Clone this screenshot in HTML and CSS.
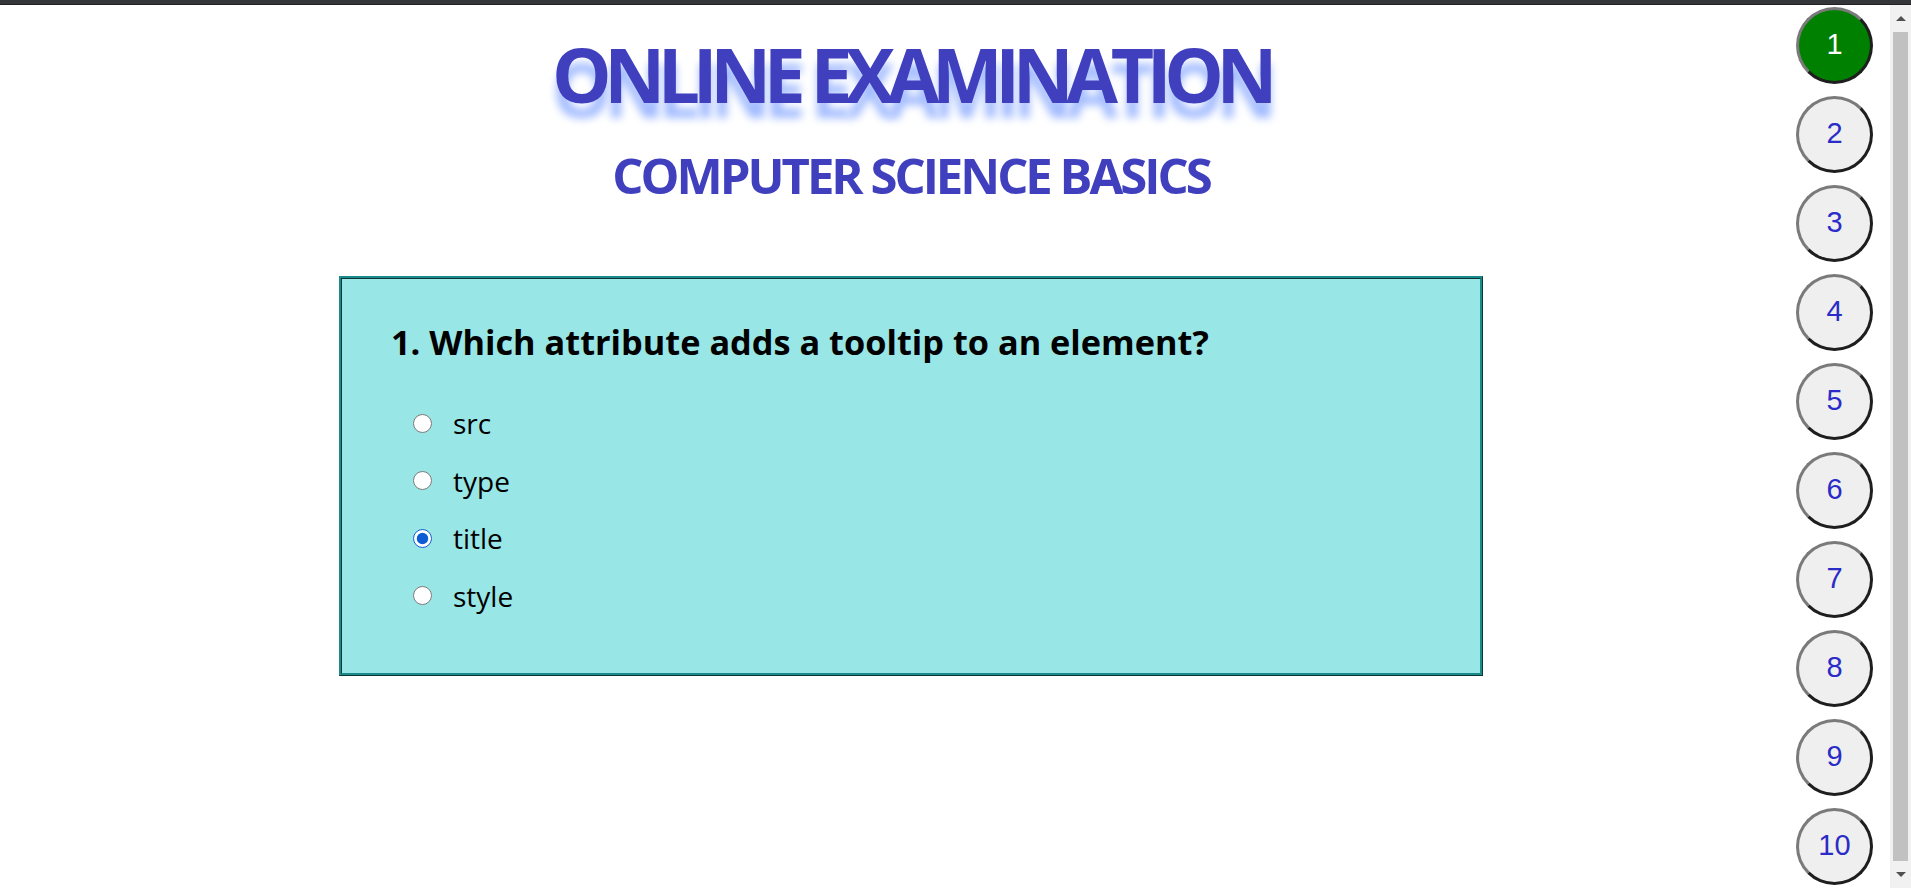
FILE: index.html
```html
<!DOCTYPE html>
<html lang="en">
<head>
<meta charset="utf-8">
<title>Online Examination</title>
<link rel="stylesheet" href="styles.css">
</head>
<body>
<div class="topbar"></div>
<div class="page">
  <main class="main">
    <h1 class="title">ONLINE EXAMINATION</h1>
    <h2 class="subtitle">COMPUTER SCIENCE BASICS</h2>
    <section class="question-box">
      <h3 class="question">1. Which attribute adds a tooltip to an element?</h3>
      <div class="options">
        <label class="option"><input type="radio" name="q1" class="radio"><span>src</span></label>
        <label class="option"><input type="radio" name="q1" class="radio"><span>type</span></label>
        <label class="option"><input type="radio" name="q1" class="radio" checked><span>title</span></label>
        <label class="option"><input type="radio" name="q1" class="radio"><span>style</span></label>
      </div>
    </section>
  </main>
  <nav class="sidebar">
    <button class="qbtn current">1</button>
    <button class="qbtn">2</button>
    <button class="qbtn">3</button>
    <button class="qbtn">4</button>
    <button class="qbtn">5</button>
    <button class="qbtn">6</button>
    <button class="qbtn">7</button>
    <button class="qbtn">8</button>
    <button class="qbtn">9</button>
    <button class="qbtn">10</button>
  </nav>
  <div class="scrollbar">
    <div class="sb-btn"><span class="arrow-up"></span></div>
    <div class="sb-thumb"></div>
    <div class="sb-btn"><span class="arrow-down"></span></div>
  </div>
</div>
</body>
</html>
```

FILE: styles.css
```css
html, body {
  margin: 0;
  padding: 0;
  height: 100%;
  overflow: hidden;
  background: #ffffff;
}

body {
  font-family: "Open Sans", "Noto Sans", sans-serif;
}

.topbar {
  height: 4px;
  background: #35363a;
  border-bottom: 1px solid #202124;
}

.page {
  display: flex;
  height: 883px;
}

.main {
  flex: 1;
  padding-left: 26px;
  display: flex;
  flex-direction: column;
  align-items: center;
}

.title {
  margin: 32px 0 0;
  font-size: 75px;
  line-height: 75px;
  font-weight: 700;
  color: #4040bf;
  letter-spacing: -7.4px;
  text-shadow: 0 15px 8px #a3bcff;
}

.subtitle {
  margin: 39px 0 0;
  font-size: 49px;
  line-height: 49px;
  font-weight: 700;
  color: #4040bf;
  letter-spacing: -3px;
}

.question-box {
  margin-top: 76px;
  width: 1144px;
  box-sizing: border-box;
  background: #99e6e6;
  border: 3px ridge #1a8a8a;
  padding: 41px 49px 59px;
}

.question {
  margin: 0;
  font-size: 34.3px;
  line-height: 43px;
  font-weight: 700;
  color: #000;
}

.options {
  margin: 42px 0 0 22px;
  display: flex;
  flex-direction: column;
  gap: 21.5px;
}

.option {
  display: flex;
  align-items: center;
  gap: 21px;
  font-size: 28px;
  line-height: 36px;
  color: #000;
}

.radio {
  width: 19px;
  height: 19px;
  margin: 0;
  accent-color: #0b5cd5;
}

.sidebar {
  width: 77px;
  padding: 2px 17px 0 0;
  display: flex;
  flex-direction: column;
  gap: 12px;
}

.qbtn {
  width: 77px;
  height: 77px;
  box-sizing: border-box;
  border-radius: 50%;
  border: 3px solid;
  border-color: #7a7a7a #1e1e1e #1e1e1e #7a7a7a;
  background: #efefef;
  color: #2b2bc8;
  font-family: "Liberation Sans", Arial, sans-serif;
  font-size: 29px;
  padding: 0 0 3px;
  display: flex;
  align-items: center;
  justify-content: center;
}

.qbtn.current {
  background: #008000;
  color: #ffffff;
}

.scrollbar {
  width: 21px;
  background: #f1f1f1;
  display: flex;
  flex-direction: column;
}

.sb-btn {
  height: 27px;
  display: flex;
  align-items: center;
  justify-content: center;
}

.sb-thumb {
  flex: 1;
  margin: 0 3px;
  background: #c1c1c1;
}

.arrow-up {
  width: 0;
  height: 0;
  border-left: 5px solid transparent;
  border-right: 5px solid transparent;
  border-bottom: 5px solid #505050;
}

.arrow-down {
  width: 0;
  height: 0;
  border-left: 5px solid transparent;
  border-right: 5px solid transparent;
  border-top: 5px solid #505050;
}
```
